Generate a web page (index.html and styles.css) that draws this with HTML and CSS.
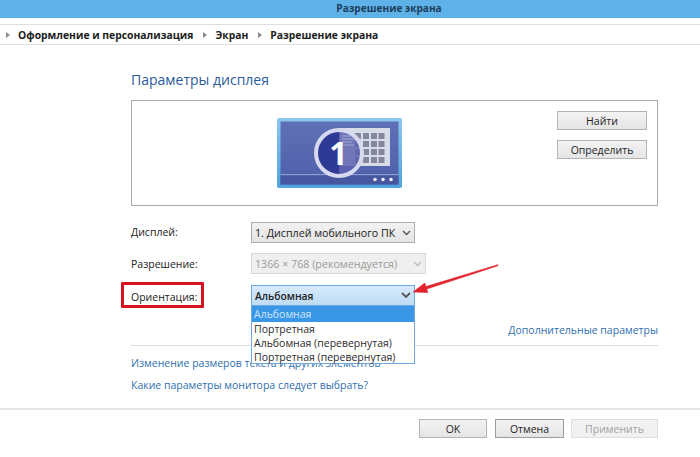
FILE: index.html
```html
<!DOCTYPE html>
<html lang="ru">
<head>
<meta charset="utf-8">
<title>Разрешение экрана</title>
<link rel="stylesheet" href="styles.css">
</head>
<body>
<div class="page">
  <header class="titlebar">Разрешение экрана</header>
  <nav class="crumbs">
    <span class="tri"></span><span>Оформление и персонализация</span>
    <span class="tri"></span><span>Экран</span>
    <span class="tri"></span><span>Разрешение экрана</span>
  </nav>
  <main class="main">
    <h1 class="heading">Параметры дисплея</h1>
    <section class="preview">
      <svg class="monitor" width="126" height="70" viewBox="0 0 126 70">
        <defs>
          <linearGradient id="scr" x1="0" y1="0" x2="0" y2="1"><stop offset="0" stop-color="#5f70b6"/><stop offset="1" stop-color="#4f60aa"/></linearGradient>
          <linearGradient id="frm" x1="0" y1="0" x2="0" y2="1"><stop offset="0" stop-color="#8cc8ee"/><stop offset="1" stop-color="#4fa3df"/></linearGradient>
        </defs>
        <rect x="0" y="0" width="125" height="70" rx="2" fill="url(#frm)"/>
        <rect x="3.500" y="3.500" width="118" height="63" fill="url(#scr)"/>
        <rect x="3.500" y="57" width="118" height="9.500" fill="#46579f"/>
        <rect x="3.500" y="56" width="118" height="1.200" fill="#8f9dd2"/>
        <rect x="63" y="10" width="50" height="38" fill="#d8dbe8"/>
        <g fill="#85889c">
          <rect x="78" y="15" width="6" height="6"/><rect x="86" y="15" width="6" height="6"/><rect x="94" y="15" width="6" height="6"/><rect x="101.500" y="15" width="6" height="6"/>
          <rect x="78" y="23" width="6" height="6"/><rect x="86" y="23" width="6" height="6"/><rect x="94" y="23" width="6" height="6"/><rect x="101.500" y="23" width="6" height="6"/>
          <rect x="78" y="31" width="6" height="6"/><rect x="86" y="31" width="6" height="6"/><rect x="94" y="31" width="6" height="6"/><rect x="101.500" y="31" width="6" height="6"/>
          <rect x="78" y="39" width="6" height="6"/><rect x="86" y="39" width="6" height="6"/><rect x="94" y="39" width="6" height="6"/><rect x="101.500" y="39" width="6" height="6"/>
        </g>
        <path d="M62 12.500a22.500 22.500 0 0 0 0 45z" fill="#2f3a94"/>
        <path d="M62 12.500a22.500 22.500 0 0 1 0 45z" fill="#5a5fae" opacity=".82"/>
        <g stroke="#a3a8d4" stroke-width="1"><path d="M65 18h10M65 21h12M65 24h10M65 27h12"/></g>
        <circle cx="62" cy="35" r="23" fill="none" stroke="#d6d9f0" stroke-width="4"/>
        <text class="digit" x="61.500" y="47" text-anchor="middle">1</text>
        <g fill="#e8ebf6"><circle cx="98" cy="61.500" r="1.800"/><circle cx="106" cy="61.500" r="1.800"/><circle cx="114" cy="61.500" r="1.800"/></g>
      </svg>
      <div class="side-buttons">
        <button class="btn btn-wide">Найти</button>
        <button class="btn btn-wide">Определить</button>
      </div>
    </section>

    <div class="row row-display">
      <span class="label">Дисплей:</span>
      <div class="select"><span>1. Дисплей мобильного ПК</span><svg class="chev" width="9" height="6" viewBox="0 0 9 6"><path d="M1 1l3.500 3.500L8 1" fill="none" stroke="#555" stroke-width="1.400"/></svg></div>
    </div>
    <div class="row row-res">
      <span class="label">Разрешение:</span>
      <div class="select select-off"><span>1366 × 768 (рекомендуется)</span><svg class="chev" width="9" height="6" viewBox="0 0 9 6"><path d="M1 1l3.500 3.500L8 1" fill="none" stroke="#bdbdbd" stroke-width="1.400"/></svg></div>
    </div>
    <div class="row row-orient">
      <span class="label label-marked">Ориентация:</span>
      <div class="select-wrap">
        <div class="select select-open"><span>Альбомная</span><svg class="chev" width="10" height="7" viewBox="0 0 10 7"><path d="M1 1l4 4 4-4" fill="none" stroke="#555" stroke-width="1.800"/></svg></div>
        <ul class="menu">
          <li class="menu-on">Альбомная</li>
          <li>Портретная</li>
          <li>Альбомная (перевернутая)</li>
          <li>Портретная (перевернутая)</li>
        </ul>
      </div>
    </div>
    <div class="more"><a class="link">Дополнительные параметры</a></div>
    <div class="rule"></div>
    <p class="link-row"><a class="link">Изменение размеров текста и других элементов</a></p>
    <p class="link-row link-row-2"><a class="link">Какие параметры монитора следует выбрать?</a></p>
  </main>
  <footer class="footer">
    <button class="btn btn-ok">OK</button>
    <button class="btn btn-cancel">Отмена</button>
    <button class="btn btn-apply" disabled>Применить</button>
  </footer>
  <svg class="arrow" width="90" height="34" viewBox="0 0 90 34">
    <path d="M88 2.700L15.900 24.600 14.800 21 3 30 17.800 30.600 16.700 27 88 3.700z" fill="#e3232b" stroke="#e3232b" stroke-width=".6"/>
  </svg>
</div>
</body>
</html>
```
FILE: styles.css
```css
*, *::before { box-sizing: border-box; }
html, body { margin: 0; padding: 0; }
body { background: #fff; font-family: "Open Sans", "Noto Sans", sans-serif; font-size: 10.5px; color: #222; }
.page { position: relative; width: 700px; height: 457px; overflow: hidden; }
.titlebar { height: 18px; background: #5fb2e7; color: #1d3d5c; font-weight: 700; font-size: 10.1px; line-height: 17px; text-align: center; padding-left: 78px; }
.crumbs { margin-top: 6px; height: 21px; border-top: 1px solid #dedede; border-bottom: 1px solid #dedede; display: flex; align-items: center; padding-left: 6px; font-weight: 700; font-size: 10.35px; color: #1c1c1c; }
.tri { width: 0; height: 0; border-left: 4px solid #8a8a8a; border-top: 3.500px solid transparent; border-bottom: 3.500px solid transparent; margin-right: 8px; }
.crumbs span:not(.tri) { margin-right: 10px; }
.main { padding: 0 42px 0 131px; }
.heading { margin: 25px 0 0; height: 30px; font-size: 14px; font-weight: 400; line-height: 20px; color: #2b5b9a; }
.preview { height: 106px; border: 1px solid #ababab; display: flex; padding: 10px 9px 0 145px; justify-content: space-between; }
.monitor { margin-top: 7px; }
.digit { font-family: "Open Sans", sans-serif; font-weight: 700; font-size: 32px; fill: #fff; }
.side-buttons { display: flex; flex-direction: column; gap: 10px; margin-right: 1px; }
.btn { font: inherit; font-size: 10.500px; color: #1f1f1f; height: 19px; padding: 0; border: 1px solid #b4b4b4; background: linear-gradient(#f3f3f3, #e5e5e5); }
.btn-wide { width: 90px; }
.row { display: flex; align-items: center; height: 21px; }
.row-display { margin-top: 16px; }
.row-res { margin-top: 10px; }
.row-orient { margin-top: 11px; }
.label { width: 120px; position: relative; top: -1px; }
.row-res .label { top: 0; }
.select { width: 164px; height: 21px; display: flex; align-items: center; justify-content: space-between; padding: 0 3px; border: 1px solid #aeaeae; background: linear-gradient(#f2f2f2, #e4e4e4); color: #222; font-size: 10.7px; }
.select-off { width: 175px; background: #efefef; border-color: #d9d9d9; color: #9a9a9a; }
.select-open { background: linear-gradient(#d6eafb, #bedcf6); border-color: #6ea9de; font-weight: 600; font-size: 10.3px; }
.select-wrap { position: relative; width: 164px; height: 21px; }
.menu { position: absolute; z-index: 2; left: 0; top: 21px; width: 164px; height: 58px; margin: 0; padding: 0; list-style: none; background: #fff; border: 1px solid #6ea9de; border-top: 0; line-height: 14px; }
.menu li { height: 14px; padding-left: 2px; white-space: nowrap; color: #2c2c2c; }
.menu .menu-on { height: 16px; line-height: 16px; background: #3a97e8; color: #cfe6fa; }
.label-marked { top: 1px; }
.label-marked::before { content: ""; position: absolute; left: -10px; top: -8px; width: 83px; height: 26px; border: 3px solid #d9121f; border-radius: 1px; }
.more { margin-top: 17px; height: 14px; line-height: 14px; text-align: right; }
.link { color: #2f6fae; }
.rule { margin-top: 8px; height: 1px; background: #dcdcdc; }
.link-row { margin: 10px 0 0; line-height: 14px; height: 14px; }
.link-row-2 { margin-top: 8px; }
.footer { margin-top: 16px; border-top: 2px solid #e6e6e6; padding: 9px 42px 0 419px; display: flex; }
.btn-ok { width: 68px; }
.btn-cancel { width: 69px; margin-left: 8px; border-color: #9c9c9c; }
.btn-apply { width: 87px; margin-left: 7px; border-color: #dedede; background: #f1f1f1; color: #a2a2a2; }
.arrow { position: absolute; z-index: 3; left: 410px; top: 262px; }
```
